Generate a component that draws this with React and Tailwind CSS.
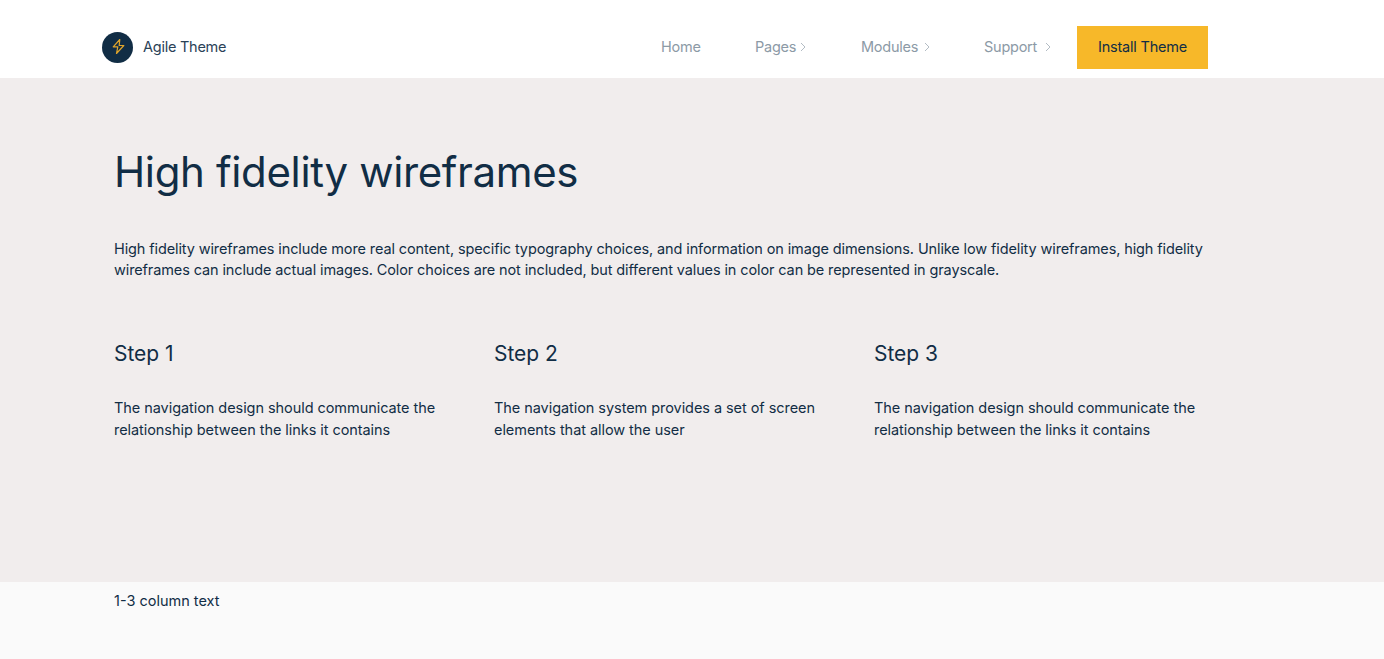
const navLinks = [
  { label: "Home", width: "w-[40px]", gap: "mr-[54px]" },
  { label: "Pages", width: "w-[51px]", gap: "mr-[55px]", arrow: true },
  { label: "Modules", width: "w-[69px]", gap: "mr-[54px]", arrow: true },
  { label: "Support", width: "w-[67px]", gap: "mr-[26px]", arrow: true },
];

const steps = [
  { title: "Step 1", lines: ["The navigation design should communicate the", "relationship between the links it contains"] },
  { title: "Step 2", lines: ["The navigation system provides a set of screen", "elements that allow the user"] },
  { title: "Step 3", lines: ["The navigation design should communicate the", "relationship between the links it contains"] },
];

function App() {
  return (
    <div className="min-h-[659px] bg-[#fafafa] font-['Inter',sans-serif] text-[#112d45]">
      <header className="h-[78px] bg-white pl-[102px] pt-[16px]">
        <div className="flex h-[62px] w-[1106px] items-center justify-between">
          <div className="flex items-center">
            <div className="flex h-[31px] w-[31px] items-center justify-center rounded-full bg-[#112d45]">
              <svg width="16" height="18" viewBox="0 0 16 18" fill="none" stroke="#e0a52c" strokeWidth="1.2" strokeLinejoin="round">
                <path d="M9.8 1.5 L3.2 8.8 L7.8 8.8 L6.5 15.5 L13.8 7.5 L9.2 7.5 Z" />
              </svg>
            </div>
            <span className="ml-[10px] text-[14.5px] tracking-[-0.25px] text-[#2a4257]">Agile Theme</span>
          </div>
          <nav className="flex items-center">
            {navLinks.map((link) => (
              <a key={link.label} className={`flex items-center justify-between text-[14.5px] tracking-[-0.25px] text-[#8c9aa6] ${link.width} ${link.gap}`}>
                {link.label}
                {link.arrow && (
                  <svg width="6" height="10" viewBox="0 0 6 10" fill="none" stroke="#b3bcc4" strokeWidth="1">
                    <path d="M1 1 L5 5 L1 9" />
                  </svg>
                )}
              </a>
            ))}
            <button className="h-[43px] w-[131px] bg-[#f7b829] text-[14.5px] tracking-[-0.2px] text-[#112d45]">Install Theme</button>
          </nav>
        </div>
      </header>

      <main className="h-[504px] bg-[#f1eded] pl-[114px] pt-[67px]">
        <h1 className="text-[42px] leading-[54px] tracking-[-0.35px]">High fidelity wireframes</h1>
        <p className="mt-[39px] w-[1100px] text-[14.5px] leading-[21px] tracking-[-0.115px]">
          High fidelity wireframes include more real content, specific typography choices, and information on image dimensions. Unlike low fidelity wireframes, high fidelity wireframes can include actual images. Color choices are not included, but different values in color can be represented in grayscale.
        </p>
        <div className="mt-[59px] grid w-[1140px] grid-cols-3">
          {steps.map((step) => (
            <div key={step.title}>
              <h2 className="text-[21px] leading-[30px] tracking-[-0.05px]">{step.title}</h2>
              <p className="mt-[28px] text-[14.5px] leading-[22px] tracking-[-0.06px]">
                {step.lines[0]}
                <br />
                {step.lines[1]}
              </p>
            </div>
          ))}
        </div>
      </main>

      <div className="h-[77px] pl-[114px] pt-[8px] text-[14.5px] leading-[21px] tracking-[0px]">1-3 column text</div>
    </div>
  );
}

export default App;
